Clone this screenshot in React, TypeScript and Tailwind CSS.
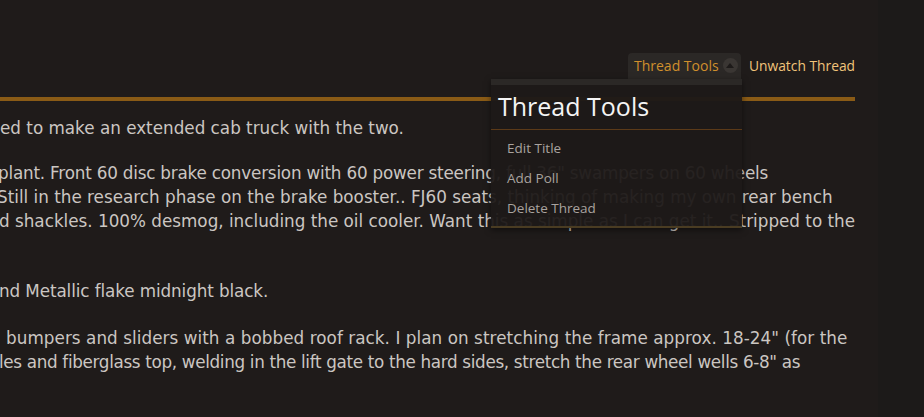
import React from "react";

const bodyFont = { fontFamily: '"DejaVu Sans", Verdana, sans-serif' };
const uiFont = { fontFamily: '"Open Sans", "Noto Sans", sans-serif' };

function Line({ children, className = "" }: { children: React.ReactNode; className?: string }) {
  return <div className={"whitespace-nowrap leading-[24px] h-[24px] " + className}>{children}</div>;
}

export default function App() {
  return (
    <div className="w-[924px] h-[417px] bg-[#1f1b1a] relative overflow-hidden flex">
      <div className="w-[878px] shrink-0 flex flex-col">
        <div className="h-[53px]" />
        <div className="flex justify-end items-start pr-[23px] h-[32px]" style={uiFont}>
          <div className="h-[32px] w-[113px] bg-[#2b2826] rounded-t-[4px] flex items-center pl-[6px] pb-[7px] text-[14px] text-[#d08f2c]">
            <span>Thread Tools</span>
            <span className="ml-[4px] w-[15px] h-[15px] rounded-full bg-[#3a3633] flex items-center justify-center">
              <svg width="8" height="5" viewBox="0 0 8 5">
                <path d="M0 5 L4 0 L8 5 Z" fill="#1d1a19" />
              </svg>
            </span>
          </div>
          <div className="h-[26px] flex items-center ml-[8px] text-[13.8px] text-[#f1c47a]">Unwatch Thread</div>
        </div>
        <div className="h-[12px]" />
        <div className="h-[4px] w-[855px] bg-[#8a5b16]" />
        <div className="mt-[15px] text-[16.8px] text-[#cbc6c2]" style={bodyFont}>
          <Line>ed to make an extended cab truck with the two.</Line>
          <Line className="mt-[21px] -ml-[2px] tracking-[-0.2px]">plant. Front 60 disc brake conversion with 60 power steering, full 36" swampers on 60 wheels</Line>
          <Line className="-ml-[3px]">Still in the research phase on the brake booster.. FJ60 seats, thinking of making my own rear bench</Line>
          <Line className="-ml-[1px]">d shackles. 100% desmog, including the oil cooler. Want this as simple as I can get it.. Stripped to the</Line>
          <Line className="mt-[46px] -ml-[1px] tracking-[-0.1px]">nd Metallic flake midnight black.</Line>
          <Line className="mt-[23px] pl-[6px] tracking-[0.06px]">bumpers and sliders with a bobbed roof rack. I plan on stretching the frame approx. 18-24" (for the</Line>
          <Line className="-ml-[1px] tracking-[-0.33px]">les and fiberglass top, welding in the lift gate to the hard sides, stretch the rear wheel wells 6-8" as</Line>
        </div>
      </div>
      <div className="flex-1 bg-[#1c1a19]" />

      <div
        className="absolute left-[491px] top-[79px] w-[251px] flex flex-col shadow-[0_2px_6px_rgba(0,0,0,0.5)]"
        style={uiFont}
      >
        <div className="h-[6px] bg-[#2b2826]" />
        <div className="bg-[#1d1918]/[0.96] border-b border-[#5c3a18] h-[45px] flex items-center pl-[7px] pb-[2px]">
          <span className="text-[25px] text-[#f4f4f4] leading-none">Thread Tools</span>
        </div>
        <div className="bg-[#1d1918]/[0.95] flex flex-col pl-[16px] pt-[3px] pb-[3px] text-[13.5px] text-[#a9a39f] border-b-2 border-[#4a3c22]">
          <div className="h-[30px] flex items-center">Edit Title</div>
          <div className="h-[30px] flex items-center pt-[1px]">Add Poll</div>
          <div className="h-[30px] flex items-center">Delete Thread</div>
        </div>
      </div>
    </div>
  );
}
